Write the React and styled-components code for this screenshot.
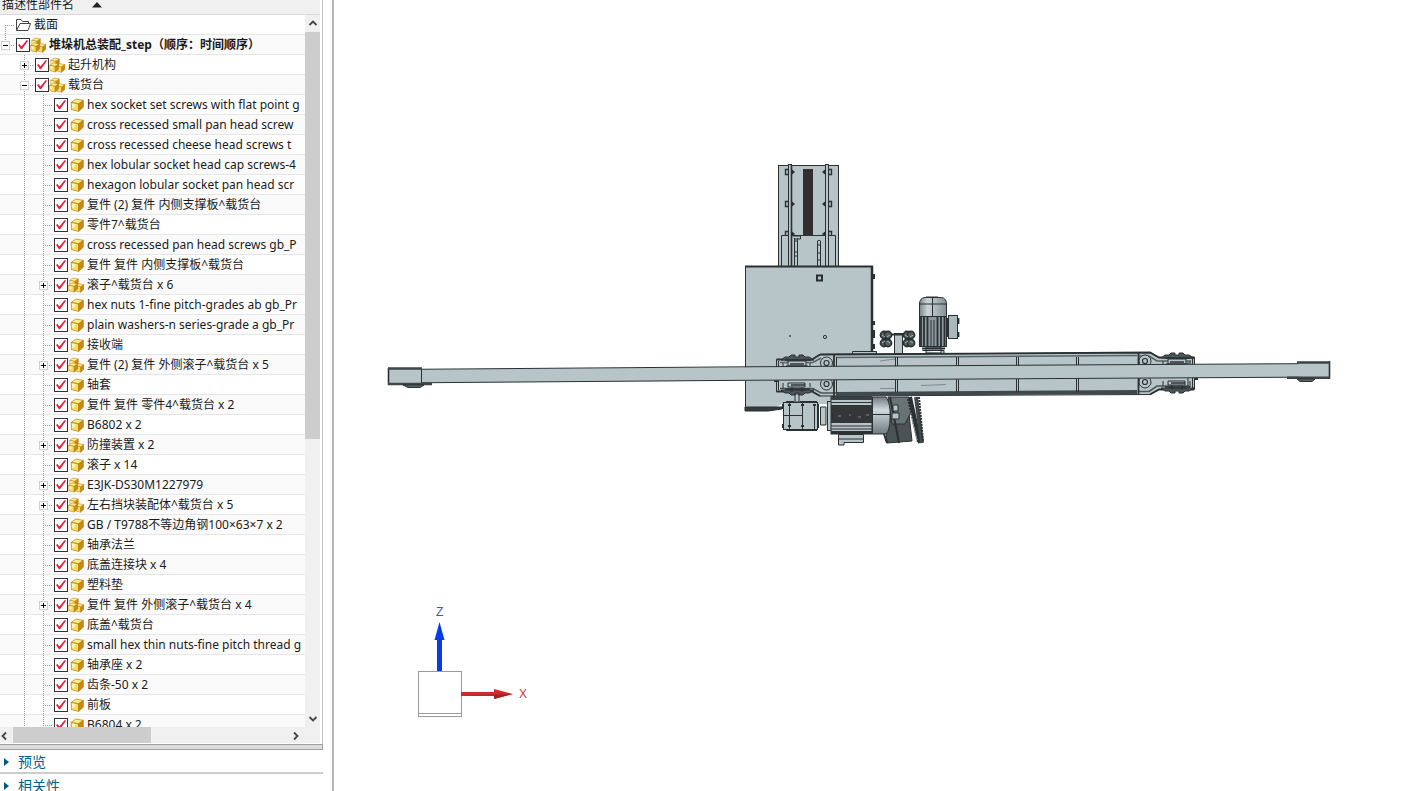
import { Fragment } from 'react'
import styled, { createGlobalStyle } from 'styled-components'

const rows = [
  { text: '截面', level: 0, kind: 'folder' },
  { text: '堆垛机总装配_step（顺序：时间顺序）', level: 0, kind: 'asm', open: true, bold: true },
  { text: '起升机构', level: 1, kind: 'asm', open: false },
  { text: '载货台', level: 1, kind: 'asm', open: true },
  { text: 'hex socket set screws with flat point g' },
  { text: 'cross recessed small pan head screw' },
  { text: 'cross recessed cheese head screws t' },
  { text: 'hex lobular socket head cap screws-4' },
  { text: 'hexagon lobular socket pan head scr' },
  { text: '复件 (2) 复件 内侧支撑板^载货台' },
  { text: '零件7^载货台' },
  { text: 'cross recessed pan head screws gb_P' },
  { text: '复件 复件 内侧支撑板^载货台' },
  { text: '滚子^载货台 x 6', kind: 'asm', open: false },
  { text: 'hex nuts 1-fine pitch-grades ab gb_Pr' },
  { text: 'plain washers-n series-grade a gb_Pr' },
  { text: '接收端' },
  { text: '复件 (2) 复件 外侧滚子^载货台 x 5', kind: 'asm', open: false },
  { text: '轴套' },
  { text: '复件 复件 零件4^载货台 x 2' },
  { text: 'B6802 x 2' },
  { text: '防撞装置 x 2', kind: 'asm', open: false },
  { text: '滚子 x 14' },
  { text: 'E3JK-DS30M1227979', kind: 'asm', open: false },
  { text: '左右挡块装配体^载货台 x 5', kind: 'asm', open: false },
  { text: 'GB / T9788不等边角钢100×63×7 x 2' },
  { text: '轴承法兰' },
  { text: '底盖连接块 x 4' },
  { text: '塑料垫' },
  { text: '复件 复件 外侧滚子^载货台 x 4', kind: 'asm', open: false },
  { text: '底盖^载货台' },
  { text: 'small hex thin nuts-fine pitch thread g' },
  { text: '轴承座 x 2' },
  { text: '齿条-50 x 2' },
  { text: '前板' },
  { text: 'B6804 x 2' },
]

const Cube = ({ x = 0, y = 0, s = 1 }) => (
  <g transform={`translate(${x} ${y}) scale(${s})`} stroke="#b07d12" strokeWidth="0.7" strokeLinejoin="round">
    <path d="M0.5 4 L5.2 0.6 L12.7 2 L8 5.4 Z" fill="#fdeb8c" />
    <path d="M0.5 4 L8 5.4 L8 13 L0.8 11.2 Z" fill="#fbdc5e" />
    <path d="M8 5.4 L12.7 2 L12.7 8.8 L8 13 Z" fill="#c98a10" />
    <path d="M1.5 5 L5 5.8 L3.4 9.6 L1.5 9.2 Z" fill="#fff6c0" stroke="none" />
  </g>
)

const KindIcon = ({ kind }) => {
  if (kind === 'folder') {
    return (
      <svg width="15" height="14" viewBox="0 0 15 14" fill="#fff" stroke="#444" strokeLinejoin="round">
        <path d="M0.5 12.5 V1.5 H5 L6.5 3.5 H12.5 V5.5" />
        <path d="M0.5 12.5 L4 5.5 H14.5 L12 12.5 Z" />
      </svg>
    )
  }
  if (kind === 'asm') {
    return (
      <svg width="16" height="16" viewBox="0 0 16 16">
        <Cube x={1.4} y={0.6} s={0.7} />
        <Cube x={7} y={6.2} s={0.7} />
        <Cube x={0.3} y={5.4} s={0.74} />
      </svg>
    )
  }
  return (
    <svg width="16" height="16" viewBox="0 0 16 16">
      <Cube x={2.6} y={1.4} />
    </svg>
  )
}

const TreeRow = ({ row, index }) => {
  const { text, level = 2, kind = 'part', open, bold } = row
  const id = `node-${index}`
  return (
    <Row $tint={index % 2 === 1}>
      {Array.from({ length: level }, (_, i) => (
        <Guide key={i} $line={i > 0} />
      ))}
      <Branch $first={index === 0} $last={index === 1}>
        {open !== undefined && (
          <Expander type="button" aria-label={open ? '折叠' : '展开'}>
            <svg width="7" height="7" viewBox="0 0 7 7" stroke="#000">
              <path d={open ? 'M1 3.5 H6' : 'M1 3.5 H6 M3.5 1 V6'} />
            </svg>
          </Expander>
        )}
      </Branch>
      {kind !== 'folder' && <Check type="checkbox" id={id} defaultChecked />}
      <KindIcon kind={kind} />
      <Name as={kind === 'folder' ? 'span' : 'label'} htmlFor={kind === 'folder' ? undefined : id} $bold={bold}>
        {text}
      </Name>
    </Row>
  )
}

const arrows = {
  up: 'M1.5 6 L5 2.5 L8.5 6',
  down: 'M1.5 3 L5 6.5 L8.5 3',
  left: 'M6 1.5 L2.5 5 L6 8.5',
  right: 'M3 1.5 L6.5 5 L3 8.5',
}

const ScrollArrow = ({ dir }) => (
  <ArrowButton type="button" aria-label={dir} $dir={dir}>
    <svg width="10" height="10" viewBox="0 0 10 10" fill="none" stroke="#444" strokeWidth="1.8">
      <path d={arrows[dir]} />
    </svg>
  </ArrowButton>
)

// wheels above and below the beam, drawn round the centre of the pair
const WheelBlock = ({ x, y }) => (
  <g transform={`translate(${x} ${y})`}>
    <path d="M-16 -15 L-12 -18 H-8 L-6 -20 H-2 V-18 H2 V-20 H6 L8 -18 H12 L17 -15 Z" fill="#4c5658" />
    <path d="M-16 15 L-12 18 H-8 L-6 20 H-2 V18 H2 V20 H6 L8 18 H12 L17 15 Z" fill="#4c5658" />
    <path d="M-9 -14 H9 V-9 H-9 Z M-11 -9 H11 M-9 8 H8 V12 H-9 Z M-5 12 V17 M5 12 V17 M-9 15 H9" />
    <path d="M-12 -15 H14 M-12 14 H13 M-7 -11 H7 M-6 10 H8" strokeWidth="1.6" />
    <path d="M-14 -12 V-8 M-14 8 V13 M13 -12 V-8 M13 8 V12" />
  </g>
)

const Bolt = ({ x, y }) => (
  <g>
    <circle cx={x} cy={y} r="6" />
    <circle cx={x} cy={y} r="2.5" strokeWidth="1.2" />
  </g>
)

const Roller = ({ x }) => (
  <g fill="#566062" strokeWidth="1.6">
    <circle cx={x - 2} cy="335" r="3.6" />
    <circle cx={x + 2} cy="335" r="3.6" />
    <circle cx={x - 2} cy="343" r="3.6" />
    <circle cx={x + 2} cy="343" r="3.6" />
    <path d={`M${x - 4} 335 l3 2 M${x + 4} 335 l-3 2 M${x - 4} 343 l3 -2 M${x + 4} 343 l-3 -2`} stroke="#a3b0b4" strokeWidth="1" />
  </g>
)

const Model = () => (
  <Canvas viewBox="334 0 1069 791" preserveAspectRatio="xMinYMin meet" role="img" aria-label="堆垛机总装配">
    <defs>
      <linearGradient id="drum" x1="0" y1="0" x2="0" y2="1">
        <stop offset="0" stopColor="#6f7b7f" />
        <stop offset="0.35" stopColor="#cfdade" />
        <stop offset="1" stopColor="#6f7b7f" />
      </linearGradient>
      <linearGradient id="dome" x1="0" y1="0" x2="1" y2="0">
        <stop offset="0" stopColor="#7b878b" />
        <stop offset="0.3" stopColor="#ccd6d9" />
        <stop offset="1" stopColor="#829094" />
      </linearGradient>
    </defs>

    <g fill="#b7c5c9" stroke="#2b3133" strokeWidth="1">
      {/* mast */}
      <rect x="778.5" y="165.5" width="60" height="101" />
      {[172, 204, 234].map((y) => (
        <g key={y} fill="#2b3133">
          <path d={`M785.5 ${y - 2.5} h3 v5 h-3 Z M828.5 ${y - 2.5} h3 v5 h-3 Z`} fill="#b7c5c9" strokeWidth="1.4" />
          <path d={`M792 ${y - 2} l2.5 2 l-2.5 2 Z M825 ${y - 2} l-2.5 2 l2.5 2 Z`} />
        </g>
      ))}
      <rect x="803" y="169" width="10" height="66" fill="#332f30" stroke="none" />
      <path d="M781.5 266 V235.5 H835.5 V266" />
      <rect x="788.5" y="164.5" width="3" height="102" />
      <path d="M791.5 165 V266" strokeWidth="1.6" />
      <rect x="825.5" y="164.5" width="3" height="102" />
      <path d="M794.5 238 V266 M797.5 238 V266 M795 241 h3 M795 252 h3 M795 256 h3" />
      <path d="M793 236 H800.5 V239 H795" fill="none" />
      <path d="M817.5 266 V241 a2 2 0 0 1 3 0 V266 M817.5 245 h3 M817.5 253 h3 M817.5 260 h3" />

      {/* cabinet */}
      <path d="M745.5 266.5 H872.5 V404 H782 L768 411 H745.5 Z" stroke="none" />
      <path d="M745.5 411 V266.5" />
      <path d="M745 266.5 H873" strokeWidth="2" />
      <path d="M872 266 V352" strokeWidth="2.5" />
      <path d="M874 274 v5 M874 321 v4 M874 330 v8 M874 344 v5" strokeWidth="2" />
      <path d="M745 407 H782 V409 L768 411 H745 Z" fill="#353b3d" />
      <rect x="817" y="275.5" width="5" height="5" strokeWidth="2" />
      <circle cx="825" cy="337" r="1.6" />
      <circle cx="790" cy="336" r="0.5" />

      {/* upper motor and guide rollers */}
      <rect x="894.5" y="333.5" width="8" height="20" />
      <Roller x={886} />
      <Roller x={909} />
      <path d="M892 334.5 H904" strokeWidth="2" />
      <path d="M919.5 317 V304 Q919.5 298 925 297.5 H941 Q946.5 298 946.5 304 V317 Z" fill="url(#dome)" />
      <path d="M919.5 304 H946.5 M932.5 297 V317 M926 297 H938" />
      <rect x="919.5" y="316.5" width="27" height="30" fill="#8d999c" />
      <path d="M921 317 V346 M924 317 V346 M927.5 317 V346 M937.5 317 V346 M941 317 V346 M944.5 317 V346" strokeWidth="1.8" />
      <path d="M931 320 V346 M934 320 V346" />
      <path d="M922.5 350.5 H944 V353.5 M926 347 V353 H941 V347 Z" />
      <path d="M922 348.5 H945" strokeWidth="2" />
      <rect x="948.5" y="315.5" width="9" height="23" fill="#aab8bc" />
      <path d="M947.5 318 V337 M958.5 318 V324 M958.5 332 V337" strokeWidth="1.8" />

      {/* lower gearbox and motor */}
      <path d="M795 394 H799 V402 H795 Z" />
      <rect x="783.5" y="402.5" width="34" height="27" />
      <path d="M789.5 403 V430 M802.5 401 V430 M814.5 404 V430 M783 415.5 H803" />
      <path d="M786 402 H794 M800 402 H817 M786 430 H817 M783 404 V409 M783 424 V428" strokeWidth="2" />
      <path d="M788 405 h3 M801 405 h3 M813 405 h3 M788 426 h3 M801 426 h3" strokeWidth="2" />
      <path d="M818.5 404 V428 M820.5 407 V425 H826 V407 Z" />
      <rect x="827.5" y="401.5" width="4" height="29" />
      <rect x="831" y="397" width="41" height="37" fill="#b7c5c9" />
      <rect x="831" y="396" width="41" height="4" fill="#3b4143" stroke="none" />
      <rect x="831" y="405" width="41" height="18" fill="#353637" stroke="none" />
      <path d="M831 402.5 H872 M831 426 H872 M831 429 H872" />
      <path d="M831 432.5 H872" strokeWidth="3" />
      <path d="M838 416 h3 M849 415 h2 M858 417 h3 M866 415 h3" stroke="#7f8b8e" />
      <path d="M838.5 434.5 H863.5 V442.5 H844 V445 H838.5 Z" />
      <path d="M838 439 H863" />
      <path d="M884 405 H908 L912 441 L887 443 Z" fill="#4b5355" />
      <path d="M888 397 H909 L912 410 L905 424 H892 Z" fill="#687376" />
      <path d="M872.5 397 H886 Q891 404 890 418 Q890 430 886 434 H872.5 Z" fill="url(#drum)" />
      <path d="M872 414.5 H890" />
      <path d="M884 434 L887 443 M890 397 L899 443" strokeWidth="2" />
      <path d="M893 405 h5 v6 h-5 Z M892 413 h7 v6 h-7 Z" />
      <path d="M910 397 L920 443" strokeWidth="4" />
      <path d="M916 397 L922 443" strokeWidth="4" stroke="#40484a" />
      <path d="M908 399 L918 442 M919 397 L923 441" strokeWidth="2" strokeDasharray="2 1" />
      <path d="M912 419 L917 440" stroke="#87949a" />

      {/* carriage frame */}
      <path d="M852.5 354 V351.5 H876.5 V354" />
      <path d="M776.5 359.5 H812 L820 354.5 L1150 352.5 L1159 357.5 H1194.5 V389.5 H1159 L1150 394.5 L820 396 L812 391.5 H776.5 Z" />
      <path d="M820 354.5 L1150 352.5 L1159 357.5 H1194.5 M776.5 359.5 H812 L820 354.5" fill="none" strokeWidth="1.8" />
      <path d="M836 357.5 L1137 355.5 M780 362.5 H813 L821 358 M1139 356 H1149 L1157 361 H1191" fill="none" stroke="#586467" strokeWidth="1.6" />
      <path d="M836 394 L1137 392" stroke="#3f484a" strokeWidth="4" />
      <path d="M780 388.5 H813 L821 393 H836 M1138 391.5 H1149 L1157 386 H1191" fill="none" stroke="#4c5658" strokeWidth="1.6" />
      <path d="M776.5 391.5 H812 L820 396 M1150 394.5 L1159 389.5 H1194" fill="none" strokeWidth="1.8" />
      <path d="M778.5 361 V390 M1192.5 358 V389 M1188 362 V386" />
      {[896, 957, 1017, 1077].map((x) => (
        <path key={x} d={`M${x - 0.5} 357 V392 M${x + 1.5} 357 V392`} />
      ))}
      <path d="M834 355 V396 M1138.5 353 V394" strokeWidth="1.8" />
      <path d="M836.5 357 V393" />
      <path d="M921 385.5 L946 384.5 M880 388.5 H895 M880 361 L895 359" stroke="#7f8b8e" />
      <Bolt x={826.5} y={363} />
      <Bolt x={826.5} y={384} />
      <Bolt x={1145} y={361} />
      <Bolt x={1145} y={382} />
      <WheelBlock x={797} y={375} />
      <WheelBlock x={1177} y={373} />
      <path d="M774 381 H778 M1195 379 H1198" strokeWidth="2" />

      {/* fork beam */}
      <path d="M388 369.5 L1330 363.5 V377 L388 383 Z" stroke="none" />
      <path d="M388 369.5 L745 366.8 L1330 363.5" fill="none" />
      <path d="M388 383 L745 380.3 L1330 377" fill="none" />
      <path d="M388.5 368.5 H421.5 V384.5 H388.5 Z M1298.5 361.5 H1329.5 V378.5 H1298.5 Z" stroke="none" />
      <path d="M388.5 368 V385 M1329.5 361 V379" strokeWidth="1.6" />
      <path d="M421.5 368 V385" />
      <path d="M388 368.5 H422 M1297 362.5 H1330 M388 384 H432 M1287 377.8 H1330" strokeWidth="2.4" stroke="#3d4547" />
      <path d="M403 385 H424 L420 387.5 H408 Z M1297 379 H1315 L1312 381.5 H1300 Z" fill="#5c676a" />
    </g>

    {/* view triad */}
    <g fill="#fff" stroke="#9a9a9a">
      <rect x="418.5" y="671.5" width="43" height="45" />
      <path d="M419 713.5 H461" />
    </g>
    <path d="M437 671 V640 H434.5 L439.5 622 L444.5 640 H442 V671 Z" fill="#0a3be8" />
    <path d="M461 692 H494 V689 L513 694 L494 699 V696 H461 Z" fill="#cf2b2e" />
    <path d="M461 695.5 H494 V699 L513 694 Z" fill="#a32325" />
    <AxisName x="436" y="616" fill="#3b50dc">Z</AxisName>
    <AxisName x="519" y="698" fill="#cc3a3d">X</AxisName>
  </Canvas>
)

const App = () => {
  return (
    <Fragment>
      <GlobalStyle />
      <Window>
        <Sidebar>
          <TreePanel>
            <Header>
              <span>描述性部件名</span>
              <svg width="10" height="6" viewBox="0 0 10 6">
                <path d="M0 5.5 L5 0 L10 5.5 Z" fill="#222" />
              </svg>
            </Header>
            <TreeBody>
              <Tree>
                {rows.map((row, i) => (
                  <TreeRow key={i} row={row} index={i} />
                ))}
              </Tree>
              <VerticalBar>
                <ScrollArrow dir="up" />
                <Track>
                  <VerticalThumb />
                </Track>
                <ScrollArrow dir="down" />
              </VerticalBar>
            </TreeBody>
            <HorizontalBar>
              <ScrollArrow dir="left" />
              <Track>
                <HorizontalThumb />
              </Track>
              <ScrollArrow dir="right" />
            </HorizontalBar>
          </TreePanel>
          <Splitter />
          <Sections>
            {['预览', '相关性'].map((name) => (
              <Section key={name} type="button">
                <svg width="5" height="8" viewBox="0 0 5 8">
                  <path d="M0 0 L5 4 L0 8 Z" fill="#005a80" />
                </svg>
                {name}
              </Section>
            ))}
          </Sections>
        </Sidebar>
        <Viewport>
          <Model />
        </Viewport>
      </Window>
    </Fragment>
  )
}

const GlobalStyle = createGlobalStyle`
  * {
    box-sizing: border-box;
  }
  body {
    margin: 0;
    background: #fff;
    color: #1a1a1a;
    font-family: 'Noto Sans', 'Noto Sans CJK SC', sans-serif;
    font-size: 12px;
  }
  button {
    padding: 0;
    border: 0;
    background: none;
    font: inherit;
  }
  svg {
    display: block;
    flex-shrink: 0;
  }
`

const Window = styled.div`
  display: flex;
  height: 100vh;
  overflow: hidden;
`

const Sidebar = styled.aside`
  display: flex;
  flex-direction: column;
  flex-shrink: 0;
  width: 334px;
  padding-right: 9px;
  border-right: 2px solid #b4b4b4;
`

const TreePanel = styled.div`
  display: flex;
  flex-direction: column;
  flex: 1;
  min-height: 0;
  padding: 0 2px 1px 0;
  border-right: 1px solid #c4c4c4;
`

const Header = styled.div`
  display: flex;
  align-items: center;
  flex-shrink: 0;
  gap: 18px;
  height: 15px;
  padding: 0 0 5px 2px;
  overflow: hidden;
  background: #f0f0f0;
  border-bottom: 1px solid #d8d8d8;
  line-height: 20px;
`

const TreeBody = styled.div`
  display: flex;
  flex: 1;
  min-height: 0;
`

const Tree = styled.div`
  flex: 1;
  min-width: 0;
  overflow: hidden;
`

const Row = styled.div`
  display: flex;
  align-items: center;
  height: 20px;
  border-bottom: 1px solid #e6e6e6;
  background: ${(p) => (p.$tint ? '#fafafa' : '#fff')};
`

const dots = (angle) => `repeating-linear-gradient(${angle}, #999 0 1px, transparent 1px 2px)`

const Guide = styled.span`
  align-self: stretch;
  flex-shrink: 0;
  width: 19px;
  margin-bottom: -1px;
  background: ${(p) => p.$line && dots('180deg')} 5px 0 / 1px 100% no-repeat;
`

const Branch = styled.span`
  display: flex;
  align-items: center;
  align-self: stretch;
  flex-shrink: 0;
  width: 16px;
  margin-bottom: -1px;
  padding-left: 1px;
  background:
    ${dots('90deg')} 5px 10px / 9px 1px no-repeat,
    ${dots('180deg')} 5px ${(p) => (p.$first ? '10px' : '0')} / 1px ${(p) => (p.$last ? '10px' : '20px')} no-repeat;
`

const Expander = styled.button`
  display: grid;
  place-items: center;
  width: 9px;
  height: 9px;
  border: 1px solid #d0d0d0;
  background: #fff;
`

const Check = styled.input`
  display: grid;
  place-items: center;
  flex-shrink: 0;
  width: 14px;
  height: 14px;
  margin: 0;
  appearance: none;
  border: 1px solid #333;
  background: #fff;

  &:checked::before {
    content: '';
    width: 10px;
    height: 10px;
    background: #e81c3c;
    clip-path: polygon(0 56%, 14% 46%, 34% 70%, 88% 4%, 100% 12%, 40% 98%, 30% 98%);
  }
`

const Name = styled.label`
  margin-left: 3px;
  font-weight: ${(p) => (p.$bold ? 700 : 400)};
  line-height: 18px;
  white-space: pre;
`

const VerticalBar = styled.div`
  display: flex;
  flex-direction: column;
  width: 15px;
  background: #f0f0f0;
`

const HorizontalBar = styled.div`
  display: flex;
  flex-shrink: 0;
  height: 16px;
  padding-right: 16px;
  background: #f0f0f0;
`

const Track = styled.div`
  flex: 1;
`

const VerticalThumb = styled.div`
  height: 60%;
  background: #cdcdcd;
`

const HorizontalThumb = styled.div`
  width: 50%;
  height: 100%;
  background: #cdcdcd;
`

const ArrowButton = styled.button`
  display: grid;
  place-items: center;
  width: ${(p) => (p.$dir === 'left' ? '13px' : '16px')};
  height: 17px;
  padding-right: ${(p) => (p.$dir === 'left' ? '4px' : '0')};
`

const Splitter = styled.div`
  flex-shrink: 0;
  height: 6px;
  border: 1px solid #a0a0a0;
  border-left: 0;
  background: #dcdcdc;
`

const Sections = styled.div`
  flex-shrink: 0;
  height: 41px;
  overflow: hidden;
`

const Section = styled.button`
  display: flex;
  align-items: center;
  gap: 9px;
  width: 100%;
  height: 24px;
  padding: 2px 0 0 4px;
  border-bottom: 2px solid #cdcdcd;
  color: #005f87;
  font-size: 14px;
  line-height: 20px;
`

const Viewport = styled.main`
  flex: 1;
  min-width: 0;
`

const Canvas = styled.svg`
  width: 100%;
  height: 100%;
`

const AxisName = styled.text`
  font-family: 'Liberation Sans', sans-serif;
  font-size: 12px;
`

export default App
